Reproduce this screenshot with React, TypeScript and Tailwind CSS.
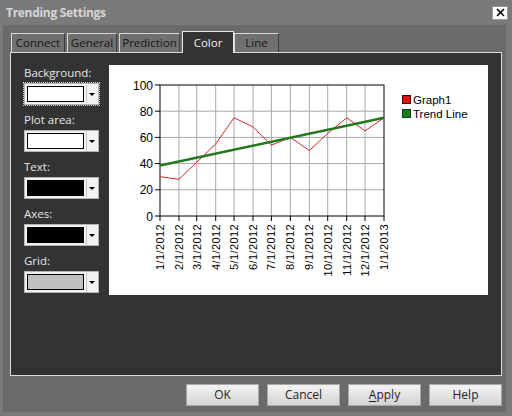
const tabs = [
  { label: 'Connect', w: 'w-[54px]' },
  { label: 'General', w: 'w-[50px]' },
  { label: 'Prediction', w: 'w-[61px]' },
  { label: 'Color', w: 'w-[52px]', active: true },
  { label: 'Line', w: 'w-[45px]' },
];

const pickers = [
  { label: 'Background:', swatch: 'bg-white', focused: true },
  { label: 'Plot area:', swatch: 'bg-white' },
  { label: 'Text:', swatch: 'bg-black' },
  { label: 'Axes:', swatch: 'bg-black' },
  { label: 'Grid:', swatch: 'bg-[#c0c0c0]' },
];

// days from 1/1/2012, value
const points: [string, number, number][] = [
  ['1/1/2012', 0, 30],
  ['2/1/2012', 31, 28],
  ['3/1/2012', 60, 41],
  ['4/1/2012', 91, 55],
  ['5/1/2012', 121, 75],
  ['6/1/2012', 152, 68],
  ['7/1/2012', 182, 54],
  ['8/1/2012', 213, 60],
  ['9/1/2012', 244, 50],
  ['10/1/2012', 274, 63],
  ['11/1/2012', 305, 75],
  ['12/1/2012', 335, 65],
  ['1/1/2013', 366, 75],
];

const X0 = 51;
const X1 = 275;
const Y0 = 151;
const sx = (d: number) => X0 + (d / 366) * (X1 - X0);
const sy = (v: number) => Y0 - v * 1.31;

function Chart() {
  const red = points.map(([, d, v]) => `${sx(d)},${sy(v)}`).join(' ');
  return (
    <svg width="379" height="230" className="block" style={{ fontFamily: '"Liberation Sans", Arial, sans-serif' }}>
      {/* grid */}
      {points.slice(1, -1).map(([l, d]) => (
        <line key={l} x1={sx(d)} x2={sx(d)} y1={sy(100)} y2={Y0} stroke="#a8a8a8" strokeWidth="1" />
      ))}
      {[20, 40, 60, 80].map((v) => (
        <line key={v} x1={X0} x2={X1} y1={sy(v)} y2={sy(v)} stroke="#a8a8a8" strokeWidth="1" />
      ))}
      <rect x={X0} y={sy(100)} width={X1 - X0} height={Y0 - sy(100)} fill="none" stroke="#000" strokeWidth="1" />
      {/* ticks and y labels */}
      {[0, 20, 40, 60, 80, 100].map((v) => (
        <g key={v}>
          <line x1={X0 - 5} x2={X0} y1={sy(v)} y2={sy(v)} stroke="#000" />
          <text x={X0 - 7} y={sy(v) + 4.5} fontSize="12" textAnchor="end" fill="#000">
            {v}
          </text>
        </g>
      ))}
      {points.map(([l, d]) => (
        <g key={l}>
          <line x1={sx(d)} x2={sx(d)} y1={Y0} y2={Y0 + 5} stroke="#000" />
          <text
            x={0}
            y={0}
            fontSize="11"
            letterSpacing="0.4"
            textAnchor="end"
            fill="#000"
            transform={`translate(${sx(d) + 4},${Y0 + 8}) rotate(-90)`}
          >
            {l}
          </text>
        </g>
      ))}
      <polyline points={red} fill="none" stroke="#d02828" strokeWidth="1" />
      <line x1={sx(0)} y1={sy(38.5)} x2={sx(366)} y2={sy(75)} stroke="#23781e" strokeWidth="2.5" />
      {/* legend */}
      <rect x="293.5" y="30.5" width="8" height="8" fill="#e01010" stroke="#400" />
      <text x="304" y="39" fontSize="11.5" fill="#000">Graph1</text>
      <rect x="293.5" y="44.5" width="8" height="8" fill="#1e7a1e" stroke="#042" />
      <text x="304" y="53" fontSize="11.5" fill="#000">Trend Line</text>
    </svg>
  );
}

function ColorPicker({ swatch, focused }: { swatch: string; focused?: boolean }) {
  return (
    <div className={`w-[75px] ${focused ? 'outline outline-1 outline-dotted outline-offset-0 outline-[#d0d0d0]' : ''}`}>
      <div className="flex h-[22px] w-[75px] items-center border border-[#b4b4b4] bg-[#f2f2f2] pl-[2px] pr-[1px]">
        <div className={`h-[16px] w-[57px] border border-black ${swatch}`} />
        <div className="ml-[2px] h-[18px] w-px bg-[#c4c4c4]" />
        <div className="flex flex-1 justify-center pt-[1px]">
          <div className="h-0 w-0 border-x-[3px] border-t-[3px] border-x-transparent border-t-black" />
        </div>
      </div>
    </div>
  );
}

export default function App() {
  return (
    <div
      className="flex h-[416px] w-[512px] flex-col bg-[#7a7a7a] text-[11.5px]"
      style={{ fontFamily: '"Open Sans", "Noto Sans", sans-serif' }}
    >
      <div className="flex h-[25px] shrink-0 items-center justify-between pl-[6px] pr-[4px]">
        <span className="text-[12px] font-bold tracking-[-0.3px] text-[#d6d6d6]">Trending Settings</span>
        <div className="flex h-[14px] w-[16px] items-center justify-center border border-[#9a9a9a] bg-white">
          <svg width="9" height="9" viewBox="0 0 9 9">
            <path d="M1 1 L8 8 M8 1 L1 8" stroke="#000" strokeWidth="1.6" />
          </svg>
        </div>
      </div>
      <div className="mb-[4px] ml-[3px] mr-[6px] flex flex-1 flex-col bg-[#6a6a6a] pl-[7px] pr-[4px] pt-[7px]">
        <div className="flex h-[20px] items-end pl-px">
          {tabs.map((t) =>
            t.active ? (
              <div
                key={t.label}
                className={`${t.w} relative z-10 -mb-px flex h-[22px] items-center justify-center border border-b-0 border-[#e8e8e8] bg-[#333333] pt-[1px] text-[#f0f0f0]`}
              >
                {t.label}
              </div>
            ) : (
              <div
                key={t.label}
                className={`${t.w} mr-[2px] flex h-[19px] items-center justify-center border border-b-0 border-l-[#d8d8d8] border-r-[#3c3c3c] border-t-[#d8d8d8] bg-[#707070] text-[#151515]`}
              >
                {t.label}
              </div>
            ),
          )}
        </div>
        <div className="flex h-[324px] border border-[#dcdcdc] bg-[#333333] pl-[13px] pt-[12px]">
          <div className="flex w-[75px] flex-col gap-[7px]">
            {pickers.map((p) => (
              <div key={p.label} className="flex flex-col gap-[3px]">
                <div className="h-[15px] leading-[15px] text-[#e6e6e6]">{p.label}</div>
                <ColorPicker swatch={p.swatch} focused={p.focused} />
              </div>
            ))}
          </div>
          <div className="ml-[10px] h-[230px] w-[379px] bg-white">
            <Chart />
          </div>
        </div>
        <div className="mt-[8px] flex justify-end gap-[8px]">
          {['OK', 'Cancel', 'Apply', 'Help'].map((b) => (
            <button
              key={b}
              className="h-[22px] w-[73px] border border-[#a8a8a8] bg-gradient-to-b from-[#f4f4f4] to-[#d4d4d4] text-[12px] text-[#1e1e1e]"
            >
              {b === 'Apply' ? (
                <>
                  <span className="underline underline-offset-2">A</span>pply
                </>
              ) : (
                b
              )}
            </button>
          ))}
        </div>
      </div>
    </div>
  );
}
